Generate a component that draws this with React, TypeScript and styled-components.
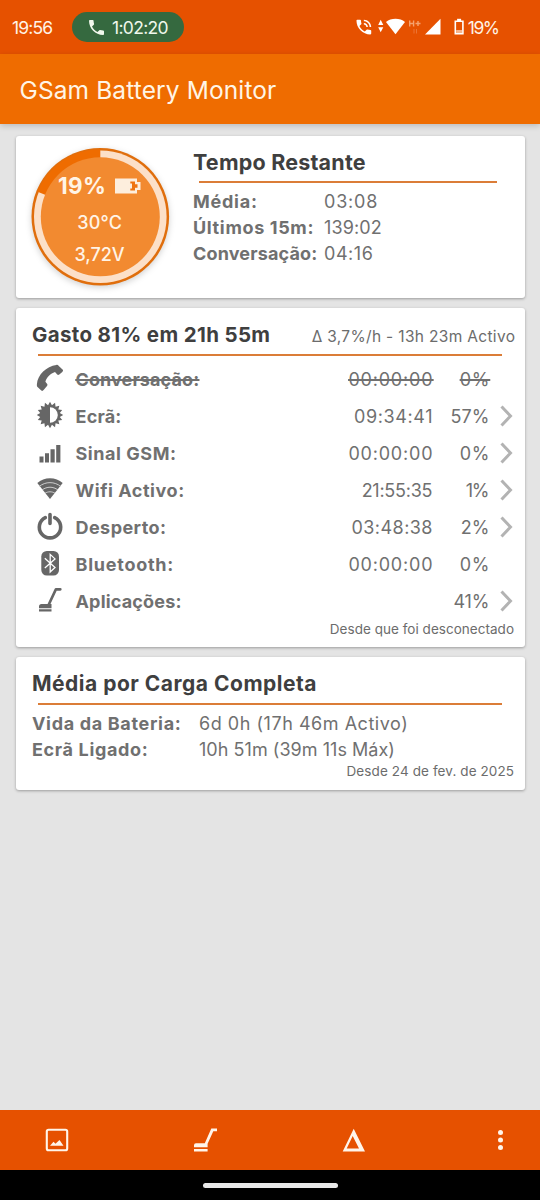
import React from "react";
import styled, { createGlobalStyle } from "styled-components";

const GlobalStyle = createGlobalStyle`
  * { box-sizing: border-box; }
  body { margin: 0; background: #e4e4e4; }
`;

const Screen = styled.div`
  width: 540px;
  height: 1200px;
  display: flex;
  flex-direction: column;
  background: #e4e4e4;
  color: #707070;
  font-family: Inter, "Open Sans", sans-serif;
  overflow: hidden;
  svg { display: block; flex: none; }
`;

const Text = styled.span<{ $size?: number; $ls?: number; $weight?: number }>`
  font-size: ${(p) => p.$size ?? 18}px;
  font-weight: ${(p) => p.$weight ?? 400};
  letter-spacing: ${(p) => p.$ls ?? 0}px;
  margin-right: ${(p) => -(p.$ls ?? 0)}px;
  white-space: nowrap;
`;

/* ---------- status bar ---------- */
const StatusBar = styled.header`
  height: 54px;
  flex: none;
  display: flex;
  align-items: center;
  padding: 0 40px 0 12px;
  background: #e65100;
  color: #fff3e6;
`;
const CallPill = styled.div`
  width: 112px;
  height: 30px;
  margin-left: 19px;
  padding-left: 17px;
  border-radius: 15px;
  display: flex;
  align-items: center;
  gap: 8px;
  background: #35693f;
  color: #f0f8ec;
`;
const StatusIcons = styled.div`
  margin-left: auto;
  display: flex;
  align-items: center;
  gap: 4px;
`;

/* ---------- app bar ---------- */
const AppBar = styled.div`
  height: 70px;
  flex: none;
  display: flex;
  align-items: center;
  padding: 1px 0 0 19.5px;
  background: #ef6c00;
  color: #fff5e6;
  box-shadow: 0 2px 6px rgba(0, 0, 0, 0.18);
`;

/* ---------- cards ---------- */
const Content = styled.main`
  flex: 1;
  display: flex;
  flex-direction: column;
  gap: 10px;
  padding: 12px 15.5px 0;
`;
const Card = styled.section<{ $height: number }>`
  height: ${(p) => p.$height}px;
  border-radius: 3px;
  background: #fff;
  box-shadow: 0 1px 3px rgba(0, 0, 0, 0.32);
`;
const Heading = styled.div`
  display: flex;
  justify-content: space-between;
  align-items: center;
  height: 28px;
  color: #3f3f3f;
`;
const HeadingNote = styled.div`
  padding: 4px 9.5px 0 0;
  color: #6c6c6c;
  line-height: 20px;
`;
const Rule = styled.div<{ $inset: string }>`
  height: 2px;
  margin: ${(p) => p.$inset};
  background: #db7d38;
`;

const RemainingCard = styled(Card)`
  display: flex;
  padding: 12px 0 0 15.5px;
`;
const Dial = styled.div`
  position: relative;
  width: 140px;
  height: 140px;
  flex: none;
  display: flex;
  flex-direction: column;
  align-items: center;
  padding: 22px 3px 0 0;
  color: #fff4e6;
  & > svg:first-child {
    position: absolute;
    inset: 0;
    overflow: visible;
    filter: drop-shadow(0 2px 3px rgba(0, 0, 0, 0.18));
  }
`;
const DialLine = styled.div<{ $height: number }>`
  position: relative;
  height: ${(p) => p.$height}px;
  display: flex;
  align-items: center;
  gap: 9px;
`;
const RemainingInfo = styled.div`
  flex: 1;
  padding-left: 22px;
`;
const Pair = styled.div<{ $column: number }>`
  display: grid;
  grid-template-columns: ${(p) => p.$column}px auto;
  justify-content: start;
  align-items: center;
  height: 26px;
`;
const UsageCard = styled(Card)`
  padding: 12px 0 0 16.5px;
`;
const UsageRow = styled.div<{ $struck?: boolean }>`
  display: grid;
  grid-template-columns: 43.5px 1fr 100px 57px 35px;
  align-items: center;
  height: 37px;
  line-height: 26px;
  text-decoration: ${(p) => (p.$struck ? "line-through" : "none")};
  text-decoration-thickness: 1.5px;
  span { text-decoration: inherit; }
`;
const RightCell = styled.div`
  display: flex;
  justify-content: flex-end;
  text-decoration: inherit;
`;
const ChevronCell = styled.div`
  padding: 0 0 2px 10px;
`;
const Footnote = styled.div`
  display: flex;
  justify-content: flex-end;
  padding-right: 10.5px;
  line-height: 18px;
  color: #6c6c6c;
`;
const AverageCard = styled(Card)`
  padding: 12px 0 0 16.5px;
`;

/* ---------- bottom ---------- */
const Toolbar = styled.nav`
  height: 60px;
  flex: none;
  display: flex;
  align-items: center;
  justify-content: space-between;
  padding: 0 28px 0 45px;
  background: #e65100;
  color: #fff5ea;
`;
const GestureBar = styled.div`
  height: 30px;
  flex: none;
  display: flex;
  align-items: center;
  justify-content: center;
  background: #000;
`;
const GesturePill = styled.div`
  width: 135px;
  height: 5px;
  border-radius: 3px;
  background: #e8e8e8;
`;

const HANDSET =
  "M6.62 10.79c1.44 2.83 3.76 5.14 6.59 6.59l2.2-2.2c.27-.27.67-.36 1.02-.24 1.12.37 2.33.57 3.57.57.55 0 1 .45 1 1V20c0 .55-.45 1-1 1-9.39 0-17-7.61-17-17 0-.55.45-1 1-1h3.5c.55 0 1 .45 1 1 0 1.25.2 2.45.57 3.57.11.35.03.74-.25 1.02l-2.2 2.2z";

const PillPhone = () => (
  <svg width="15" height="15" viewBox="3 3 18 18" fill="currentColor"><path d={HANDSET} /></svg>
);

const SystemIcons = () => (
  <svg width="108" height="18" viewBox="0 0 108 18" fill="#fff">
    <g transform="translate(-2 -.8) scale(.82)">
      <path d={HANDSET} />
      <path d="M15 12h2c0-2.8-2.2-5-5-5v2c1.700 0 3 1.300 3 3zM19 12h2c0-5-4-9-9-9v2c3.900 0 7 3.100 7 7z" />
    </g>
    <path d="M22.200 7L24.700 1.800 27.300 7zM22.200 9.200L24.700 14.300 27.300 9.200z" />
    <path d="M30 4C35 -.2 44 -.2 49 4L39.500 16.200z" />
    <g stroke="#f5a26e" strokeWidth="1.400" fill="none">
      <path d="M53.700 2.500v6M57.600 2.500v6M53.700 5.500h3.900M59.500 5.500h5M62 3v5" />
      <path d="M58 11v4.500M60.500 11v4.500" stroke="#ec7434" strokeWidth="1" />
    </g>
    <path d="M69 16.500H84.500V.8z" />
    <path d="M99.300 3.300h7.600v12.500h-7.600z" fill="none" stroke="#fff" strokeWidth="1.600" />
    <path d="M101.100.8h4v2.500h-4z" />
    <path d="M100.100 12h6v3h-6z" fill="#f7b48c" />
  </svg>
);

const DialArt = () => (
  <svg width="140" height="140" viewBox="0 0 140 140">
    <circle cx="69.300" cy="68.700" r="68.800" fill="#e06e0c" />
    <circle cx="69.300" cy="68.700" r="66.300" fill="#fce0c8" />
    <path d="M69.300 68.700V1.200A67.500 67.500 0 0 0 6.550 43.850z" fill="#ef6c00" />
    <circle cx="69.300" cy="68.700" r="59.500" fill="#f28a30" />
  </svg>
);

const BatteryGlyph = () => (
  <svg width="26" height="16" viewBox="0 0 26 16">
    <path d="M0 .5H22V4H25.500V12H22V15.500H0z" fill="#fdeedd" />
    <path d="M15.300 3.500H20V6.300H22.500V9.700H20V12.500H15.300V10.500H17V5.500H15.300z" fill="#ef7410" />
  </svg>
);

const burst = Array.from({ length: 32 }, (_, i) => {
  const r = i % 2 ? 10 : 13.2;
  const a = (i * Math.PI) / 16;
  return `${(14 + r * Math.sin(a)).toFixed(2)},${(14 - r * Math.cos(a)).toFixed(2)}`;
}).join(" ");

const RowSvg = styled.svg.attrs({ width: 28, height: 28, viewBox: "0 0 28 28" })`
  margin: 0 0 3px 4px;
  fill: #666;
`;

const PhoneIcon = () => (
  <RowSvg>
    <path d="M20.300.9C21.300.6 22.100 1 22.800 2L26.800 5.800C27.300 6.500 27 7.300 26.300 7.900L23.300 10.500C22.400 11.200 21.700 11.100 21 10.300L19 7.900C14.500 9.500 10.700 13.100 9.400 17.700L11.200 20C11.600 20.700 11.500 21.200 11 21.900L7.600 26.100C6.900 27 6.200 27.200 5.300 26.500L1.800 23.300C.9 22.500.8 21.600.9 20.300C1.500 10.500 10.500 2.200 20.300.9z" />
  </RowSvg>
);
const ScreenIcon = () => (
  <RowSvg>
    <polygon points={burst} />
    <path d="M14 6.200A7.800 7.800 0 0 1 14 21.800z" fill="#fff" />
  </RowSvg>
);
const SignalIcon = () => (
  <RowSvg>
    <path d="M3.500 18.500h4v6h-4zM9 15.300h4v9.200H9zM14.500 11.300h4.200v13.200h-4.200zM20.200 7h4.200v17.500h-4.200z" />
  </RowSvg>
);
const WifiIcon = () => (
  <RowSvg>
    <path d="M1.300 8C8 1.500 20 1.500 26.700 8L14 24z" />
    <path d="M3 11.600C9.500 6.300 18.500 6.300 25 11.600M6 15C11 11.300 17 11.300 22 15M9 18.300C12 16.300 16 16.300 19 18.300" fill="none" stroke="#d8d8d8" strokeWidth=".9" />
  </RowSvg>
);
const PowerIcon = () => (
  <RowSvg>
    <path d="M9.300 5.600A10.700 10.700 0 1 0 18.700 5.600M14 2.500V11.500" fill="none" stroke="#666" strokeWidth="3.600" strokeLinecap="round" />
  </RowSvg>
);
const BluetoothIcon = () => (
  <RowSvg>
    <rect x="5.300" y="2" width="17.700" height="24.500" rx="5.500" />
    <path d="M8.800 9.200L19 18.500 14.200 23V5.400L19 9.900 8.800 19" fill="none" stroke="#fff" strokeWidth="1.300" />
  </RowSvg>
);
const VacuumIcon = () => (
  <RowSvg>
    <path d="M24.300 3.300H19.900L12.900 18.300" fill="none" stroke="#666" strokeWidth="2.700" strokeLinecap="round" strokeLinejoin="round" />
    <path d="M5.500 18H15.500V22.300H3V20.500Q3 18 5.500 18zM3 23.300H15.500V25.500H3z" />
  </RowSvg>
);
const Chevron = () => (
  <svg width="13" height="22" viewBox="0 0 13 22">
    <path d="M1.500 1.500L10.500 11L1.500 20.500" fill="none" stroke="#b3b3b3" strokeWidth="3" />
  </svg>
);

const PictureTool = () => (
  <svg width="24" height="24" viewBox="0 0 24 24" fill="none">
    <rect x="1.800" y="1.800" width="20.400" height="20.400" rx="1.800" stroke="currentColor" strokeWidth="2.100" />
    <path d="M5 17.800L8.500 13.800 10.500 15.800 14.500 12 18.500 17.800z" fill="currentColor" />
  </svg>
);
const VacuumTool = () => (
  <svg width="28" height="24" viewBox="-3 0 28 24" fill="currentColor">
    <path d="M3 15.200H11.800L18.300.5H24V3.200H20.300L14.600 15.800V19.200H1V17.200Q1 15.200 3 15.200zM1 21H14.600V23.400H1z" />
  </svg>
);
const DeltaTool = () => (
  <svg width="28" height="24" viewBox="0 0 28 24">
    <path fillRule="evenodd" d="M14.700.8L26 23.400H3.700zM13.700 8L7.700 20.400H20z" fill="currentColor" />
  </svg>
);
const MoreTool = () => (
  <svg width="24" height="24" viewBox="0 0 24 24" fill="currentColor">
    <circle cx="12.500" cy="4.400" r="2.500" /><circle cx="12.500" cy="12" r="2.500" /><circle cx="12.500" cy="19.600" r="2.500" />
  </svg>
);

type Usage = {
  icon: React.FC;
  label: [string, number];
  time?: [string, number];
  share: [string, number];
  more?: boolean;
  struck?: boolean;
};
const usage: Usage[] = [
  { icon: PhoneIcon, label: ["Conversação:", 0.1], time: ["00:00:00", 0.8], share: ["0%", 0.6], struck: true },
  { icon: ScreenIcon, label: ["Ecrã:", 0.2], time: ["09:34:41", 0.6], share: ["57%", 0.1], more: true },
  { icon: SignalIcon, label: ["Sinal GSM:", 0.55], time: ["00:00:00", 0.8], share: ["0%", 0.6], more: true },
  { icon: WifiIcon, label: ["Wifi Activo:", 0.55], time: ["21:55:35", -0.25], share: ["1%", -1.2], more: true },
  { icon: PowerIcon, label: ["Desperto:", 0.45], time: ["03:48:38", 0.45], share: ["2%", 0], more: true },
  { icon: BluetoothIcon, label: ["Bluetooth:", 0.75], time: ["00:00:00", 0.8], share: ["0%", 0.6] },
  { icon: VacuumIcon, label: ["Aplicações:", 0.17], share: ["41%", -0.1], more: true },
];

export default function App() {
  return (
    <Screen>
      <GlobalStyle />
      <StatusBar>
        <Text $size={17.5} $ls={-0.85}>19:56</Text>
        <CallPill>
          <PillPhone />
          <Text $size={17.5} $ls={-0.7}>1:02:20</Text>
        </CallPill>
        <StatusIcons>
          <SystemIcons />
          <Text $size={17.5} $ls={-1.5}>19%</Text>
        </StatusIcons>
      </StatusBar>
      <AppBar>
        <Text $size={24.5} $weight={430} $ls={0.12}>GSam Battery Monitor</Text>
      </AppBar>

      <Content>
        <RemainingCard $height={162}>
          <Dial>
            <DialArt />
            <DialLine $height={31}>
              <Text $size={22.5} $weight={700} $ls={0.3}>19%</Text>
              <BatteryGlyph />
            </DialLine>
            <DialLine $height={42}><Text $weight={450} $ls={0.2}>30°C</Text></DialLine>
            <DialLine $height={23}><Text $weight={450}>3,72V</Text></DialLine>
          </Dial>
          <RemainingInfo>
            <Heading><Text $size={21.5} $weight={650} $ls={0.2}>Tempo Restante</Text></Heading>
            <Rule $inset="5px 27.500px 5px 6px" />
            <Pair $column={131}><Text $weight={700} $ls={0.75}>Média:</Text><Text $ls={0.8}>03:08</Text></Pair>
            <Pair $column={131}><Text $weight={700} $ls={0.65}>Últimos 15m:</Text><Text $ls={0.1}>139:02</Text></Pair>
            <Pair $column={131}><Text $weight={700} $ls={0.15}>Conversação:</Text><Text $ls={0.55}>04:16</Text></Pair>
          </RemainingInfo>
        </RemainingCard>

        <UsageCard $height={339}>
          <Heading>
            <Text $size={20.5} $weight={650} $ls={0.35}>Gasto 81% em 21h 55m</Text>
            <HeadingNote><Text $size={15.5} $ls={0.33}>Δ 3,7%/h - 13h 23m Activo</Text></HeadingNote>
          </Heading>
          <Rule $inset="6px 22.500px 5px 6px" />
          {usage.map(({ icon: Icon, label, time, share, more, struck }) => (
            <UsageRow key={label[0]} $struck={struck}>
              <Icon />
              <Text $weight={650} $ls={label[1]}>{label[0]}</Text>
              <RightCell>{time && <Text $ls={time[1]}>{time[0]}</Text>}</RightCell>
              <RightCell><Text $ls={share[1]}>{share[0]}</Text></RightCell>
              <ChevronCell>{more && <Chevron />}</ChevronCell>
            </UsageRow>
          ))}
          <Footnote><Text $size={13.5} $ls={0.03}>Desde que foi desconectado</Text></Footnote>
        </UsageCard>

        <AverageCard $height={132.5}>
          <Heading><Text $size={21} $weight={650} $ls={0.5}>Média por Carga Completa</Text></Heading>
          <Rule $inset="6px 22.500px 5px 6px" />
          <Pair $column={167}><Text $weight={700} $ls={0.67}>Vida da Bateria:</Text><Text $ls={0.53}>6d 0h (17h 46m Activo)</Text></Pair>
          <Pair $column={167}><Text $weight={700} $ls={0.65}>Ecrã Ligado:</Text><Text $ls={0.04}>10h 51m (39m 11s Máx)</Text></Pair>
          <Footnote><Text $size={13.5} $ls={0.1}>Desde 24 de fev. de 2025</Text></Footnote>
        </AverageCard>
      </Content>

      <Toolbar>
        <PictureTool />
        <VacuumTool />
        <DeltaTool />
        <MoreTool />
      </Toolbar>
      <GestureBar><GesturePill /></GestureBar>
    </Screen>
  );
}
